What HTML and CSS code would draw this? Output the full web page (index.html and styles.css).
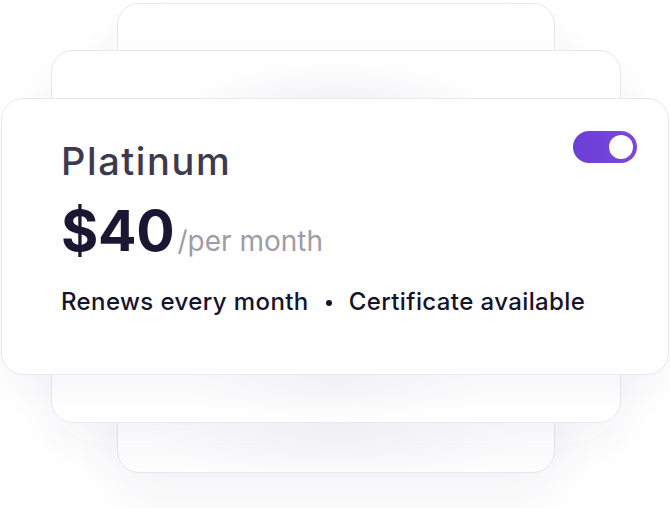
FILE: index.html
```html
<!DOCTYPE html>
<html>
<head>
<meta charset="utf-8">
<link rel="stylesheet" href="styles.css">
</head>
<body>
<div class="stack">
  <div class="card card-back"></div>
  <div class="card card-mid"></div>
  <div class="card card-front">
    <div class="front-head">
      <h2 class="plan">Platinum</h2>
      <div class="toggle"><span class="knob"></span></div>
    </div>
    <div class="price"><span class="amount">$40</span><span class="per">/per month</span></div>
    <div class="features">
      <span>Renews every month</span>
      <span class="dot"></span>
      <span>Certificate available</span>
    </div>
  </div>
</div>
</body>
</html>
```
FILE: styles.css
```css
html, body {
  margin: 0;
  padding: 0;
  background: #ffffff;
  width: 670px;
  height: 508px;
  overflow: hidden;
}
body {
  font-family: Inter, "Noto Sans", sans-serif;
}
.stack {
  display: grid;
  grid-template-columns: 670px;
  grid-template-rows: 508px;
}
.card {
  grid-area: 1 / 1;
  box-sizing: border-box;
  background: #ffffff;
  border: 1.5px solid #e8e8ee;
  border-radius: 22px;
  align-self: start;
  justify-self: start;
}
.card-back {
  margin: 3px 0 0 117px;
  width: 438px;
  height: 470px;
  background:
    radial-gradient(ellipse 190px 50px at 50% 435px, rgba(242, 242, 247, 0.6), rgba(255, 255, 255, 0) 100%),
    #ffffff;
  box-shadow: 0 24px 50px rgba(40, 30, 90, 0.05);
}
.card-mid {
  margin: 50px 0 0 51px;
  width: 570px;
  height: 373px;
  background:
    radial-gradient(ellipse 150px 40px at 50% 48px, rgba(242, 242, 247, 0.85), rgba(255, 255, 255, 0) 100%),
    radial-gradient(ellipse 150px 40px at 50% 330px, rgba(244, 244, 248, 0.7), rgba(255, 255, 255, 0) 100%),
    #ffffff;
  box-shadow: 0 20px 50px rgba(40, 30, 90, 0.05);
}
.card-front {
  margin: 98px 0 0 1px;
  width: 668px;
  height: 277px;
  padding: 36px 31px 0 59px;
  border-width: 1px;
  box-shadow: 0 16px 40px rgba(40, 30, 90, 0.04);
}
.front-head {
  display: flex;
  justify-content: space-between;
  align-items: flex-start;
}
.plan {
  margin: 0;
  font-size: 38px;
  font-weight: 500;
  color: #3d394f;
  line-height: 52px;
  letter-spacing: 1.6px;
}
.toggle {
  margin-top: -4px;
  width: 64px;
  height: 32px;
  border-radius: 16px;
  background: linear-gradient(90deg, #6a3ed6, #7b48de);
  display: flex;
  align-items: center;
  justify-content: flex-end;
  padding: 0 4px;
  box-sizing: border-box;
}
.knob {
  width: 24px;
  height: 24px;
  border-radius: 50%;
  background: #ffffff;
}
.price {
  margin-top: 12px;
  display: flex;
  align-items: baseline;
  line-height: 64px;
}
.amount {
  font-size: 57px;
  font-weight: 700;
  color: #1b1733;
  letter-spacing: -0.3px;
}
.per {
  font-size: 28px;
  font-weight: 400;
  color: #9e9ca9;
  margin-left: 3px;
}
.features {
  margin-top: 14px;
  display: flex;
  align-items: center;
  gap: 17px;
  font-size: 24px;
  font-weight: 500;
  color: #16132c;
  line-height: 30px;
  letter-spacing: 0.4px;
}
.dot {
  width: 6px;
  height: 6px;
  border-radius: 50%;
  background: #16132c;
  margin-top: 2px;
}
```
